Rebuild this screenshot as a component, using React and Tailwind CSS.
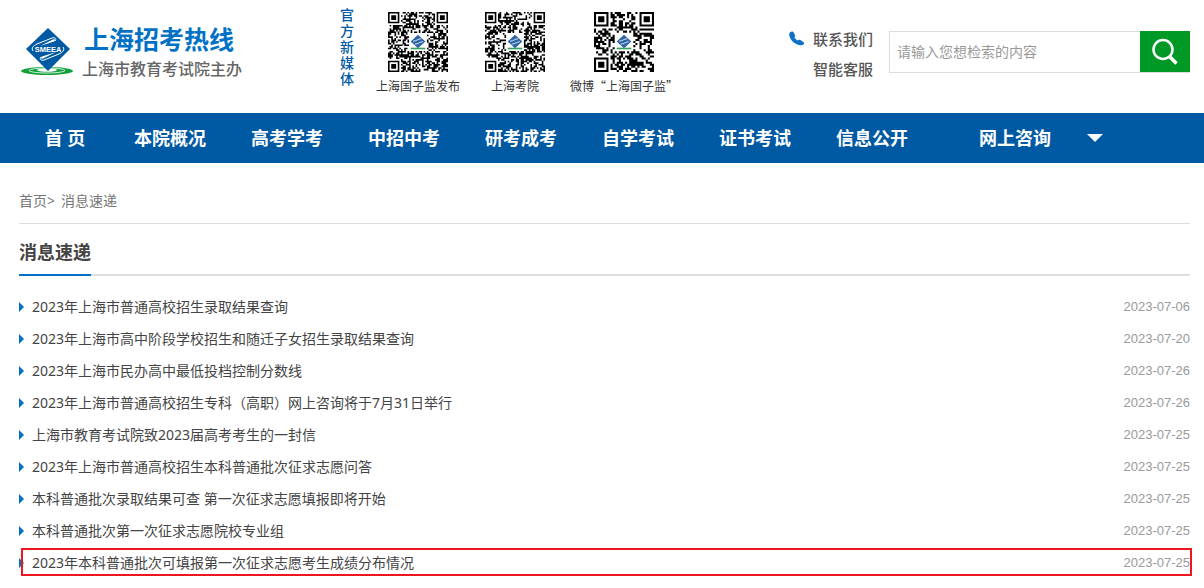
/**
 * Shanghai admissions hotline: news list page.
 */

const NAV_ITEMS = ['本院概况', '高考学考', '中招中考', '研考成考', '自学考试', '证书考试', '信息公开'];

const NEWS = [
  { title: '2023年上海市普通高校招生录取结果查询', date: '2023-07-06' },
  { title: '2023年上海市高中阶段学校招生和随迁子女招生录取结果查询', date: '2023-07-20' },
  { title: '2023年上海市民办高中最低投档控制分数线', date: '2023-07-26' },
  { title: '2023年上海市普通高校招生专科（高职）网上咨询将于7月31日举行', date: '2023-07-26' },
  { title: '上海市教育考试院致2023届高考考生的一封信', date: '2023-07-25' },
  { title: '2023年上海市普通高校招生本科普通批次征求志愿问答', date: '2023-07-25' },
  { title: '本科普通批次录取结果可查 第一次征求志愿填报即将开始', date: '2023-07-25' },
  { title: '本科普通批次第一次征求志愿院校专业组', date: '2023-07-25' },
  { title: '2023年本科普通批次可填报第一次征求志愿考生成绩分布情况', date: '2023-07-25', marked: true },
];

const QR_CODES = [
  { label: '上海国子监发布', size: 37, seed: 11 },
  { label: '上海考院', size: 37, seed: 47 },
  { label: '微博“上海国子监”', size: 29, seed: 83 },
];

export default function App() {
  return (
    <div className="bg-white font-['Noto_Sans','Noto_Sans_CJK_SC',sans-serif] text-[#444]">
      <Header />
      <NavBar />
      <main className="pl-[19px] pr-[14px] pb-2">
        <div className="flex border-b border-[#ddd] pt-6 pb-2 text-sm leading-7 text-[#777]">
          <a href="#home">首页</a>
          <span className="mr-[6px]">&gt;</span>
          <a href="#news">消息速递</a>
        </div>
        <div className="flex border-b-2 border-[#ddd]">
          <h1 className="-mb-[2px] border-b-2 border-[#0071c5] pt-2 pb-[2px] text-lg leading-10 font-bold">消息速递</h1>
        </div>
        <ul className="pt-[15px]">
          {NEWS.map(item => (
            <NewsRow key={item.title} {...item} />
          ))}
        </ul>
      </main>
    </div>
  );
}

function Header() {
  return (
    <header className="flex h-[113px] items-start pl-5 pr-[14px]">
      <a href="#home" className="flex shrink-0 items-start">
        <Logo />
        <span className="ml-2 flex flex-col pt-[22px] font-['Noto_Sans_CJK_SC',sans-serif]">
          <span className="pl-[2px] text-[25px] leading-8 font-bold text-[#0071c5]">上海招考热线</span>
          <span className="text-base leading-7 font-medium text-[#666]">上海市教育考试院主办</span>
        </span>
      </a>

      <div className="ml-[98px] flex shrink-0 gap-[22px] font-['Noto_Sans_CJK_SC',sans-serif]">
        <p className="w-[14px] pt-[6px] text-[14px] leading-4 font-medium text-[#0059a3]">官方新媒体</p>
        <div className="flex gap-[25px] pt-3">
          {QR_CODES.map(code => (
            <figure key={code.label} className="flex flex-col items-center">
              <QrCode size={code.size} seed={code.seed} />
              <figcaption className="mt-1 text-xs leading-5 text-[#333]">{code.label}</figcaption>
            </figure>
          ))}
        </div>
      </div>

      <div className="ml-auto flex shrink-0 items-start gap-2 pt-6">
        <PhoneIcon />
        <div className="flex flex-col text-[15px] leading-[30px] font-medium text-[#555]">
          <a href="#contact">联系我们</a>
          <a href="#service">智能客服</a>
        </div>
      </div>

      <form className="mt-[31px] ml-4 flex h-[42px] w-[301px] shrink-0" role="search">
        <input
          type="text"
          aria-label="检索"
          placeholder="请输入您想检索的内容"
          className="min-w-0 flex-1 border border-r-0 border-[#ddd] px-[7px] text-sm outline-none placeholder:text-[#999]"
        />
        <button type="button" aria-label="搜索" className="flex w-[50px] items-center justify-center border-b border-[#ddd] bg-[#009926] bg-clip-padding">
          <SearchIcon />
        </button>
      </form>
    </header>
  );
}

function NavBar() {
  return (
    <nav className="flex h-[50px] items-center gap-[45px] bg-[#0059a3] pl-[41px] text-lg font-bold whitespace-nowrap text-white">
      <a href="#home" className="w-12 text-center">首 页</a>
      {NAV_ITEMS.map(label => (
        <a key={label} href={`#${label}`}>{label}</a>
      ))}
      <div className="ml-[26px] flex items-center gap-9">
        <a href="#ask">网上咨询</a>
        <button type="button" aria-label="更多">
          <svg className="h-2 w-4" viewBox="0 0 16 8" fill="currentColor"><path d="M0 0h16L8 8z" /></svg>
        </button>
      </div>
    </nav>
  );
}

function NewsRow({ title, date, marked }) {
  return (
    <li className="relative flex h-8 items-center text-sm">
      <svg className="h-[10px] w-[5px] shrink-0" viewBox="0 0 5 10" fill="#0071c5"><path d="M0 0l5 5-5 5z" /></svg>
      <a href="#detail" className="ml-2">{title}</a>
      <time className="ml-auto font-['Liberation_Sans',sans-serif] text-[13px] text-[#999]">{date}</time>
      {marked && (
        <span className="pointer-events-none absolute top-px -right-[2px] bottom-[3px] left-[2px] border-2 border-[#ee1520]"></span>
      )}
    </li>
  );
}

/** Blue diamond over a green ripple */
function Logo() {
  return (
    <svg className="mt-6 h-[54px] w-[54px]" viewBox="0 0 54 54" fill="none">
      <ellipse cx="27" cy="47" rx="26" ry="4" fill="#12a038" />
      <ellipse cx="27" cy="46.5" rx="18" ry="2.5" stroke="#fff" strokeWidth="0.8" />
      <ellipse cx="27" cy="46" rx="10" ry="1.8" fill="#fff" />
      <path d="M28 4l22 21-22 22L6 25z" fill="#0059a3" />
      <g fill="#fff">
        <path d="M20 22L33 15.500c2-.8 3 1.200 1 2z" />
        <path d="M36 28L23 34.500c-2 .8-3-1.200-1-2z" />
      </g>
      <path d="M13 27c-2-3 0-5 4-7l15-6c3-1 5 1 3 3M43 23c2 3 0 5-4 7l-15 6c-3 1-5-1-3-3" stroke="#fff" strokeWidth="1" />
      <text x="28" y="27.500" fill="#fff" fontFamily="Liberation Sans, sans-serif" fontSize="7.500" fontWeight="bold" textAnchor="middle">SMEEA</text>
    </svg>
  );
}

/** Module pattern with three finder squares and the logo in the middle */
function QrCode({ size, seed }) {
  const edge = size - 7;
  const mid = (size - 1) / 2;
  const hole = Math.round(size / 8);
  let state = seed;
  let d = '';
  for (let y = 0; y < size; y++) {
    for (let x = 0; x < size; x++) {
      state = (state * 1103515245 + 12345) % 2147483648;
      const inFinder = (x < 8 && y < 8) || (x >= edge - 1 && y < 8) || (x < 8 && y >= edge - 1);
      const inHole = Math.abs(x - mid) <= hole && Math.abs(y - mid) <= hole;
      if (!inFinder && !inHole && state / 2147483648 > 0.48) d += `M${x} ${y}h1v1h-1z`;
    }
  }
  const logo = size / 37;
  return (
    <svg className="h-[60px] w-[60px]" viewBox={`0 0 ${size} ${size}`} fill="#000">
      <path d={d} />
      {[[0, 0], [edge, 0], [0, edge]].map(([x, y]) => (
        <path key={`${x}-${y}`} fillRule="evenodd" d={`M${x} ${y}h7v7h-7zM${x + 1} ${y + 1}v5h5v-5zM${x + 2} ${y + 2}h3v3h-3z`} />
      ))}
      <g transform={`scale(${logo})`}>
        <path d="M18.5 14l4.5 4.2-4.5 4.2-4.5-4.2z" fill="#2c64a5" />
        <path d="M15.5 18c2 0 3-1.5 5-1.5M16.5 19.8c2 0 3-1.3 5-1.5" stroke="#fff" strokeWidth=".5" fill="none" />
        <path d="M14 22h9v1h-9z" fill="#35a060" />
      </g>
    </svg>
  );
}

function PhoneIcon() {
  return (
    <svg className="mt-[7px] h-4 w-4" viewBox="0 0 16 16" fill="#0d72c7">
      <path d="M1.2 1.2C2.5.2 4.2.5 4.900 1.900L6 4c.5.9.1 1.600-.6 2.300.6 1.200 1.700 2.400 3.200 3.200 1-.7 1.900-.9 2.800-.4l2.900 1.800c1.100.7 1 1.800.1 2.500-1.800 1.400-4.500 1.100-7-.3C4.200 11.500 1.400 8.500.5 5.400 0 3.700.1 2.200 1.200 1.200z" />
    </svg>
  );
}

function SearchIcon() {
  return (
    <svg className="h-7 w-7" viewBox="0 0 28 28" fill="none" stroke="#fff">
      <circle cx="12" cy="11.5" r="9.5" strokeWidth="2.5" />
      <path d="M18 18l7.500 7.500" strokeWidth="3.5" />
    </svg>
  );
}
